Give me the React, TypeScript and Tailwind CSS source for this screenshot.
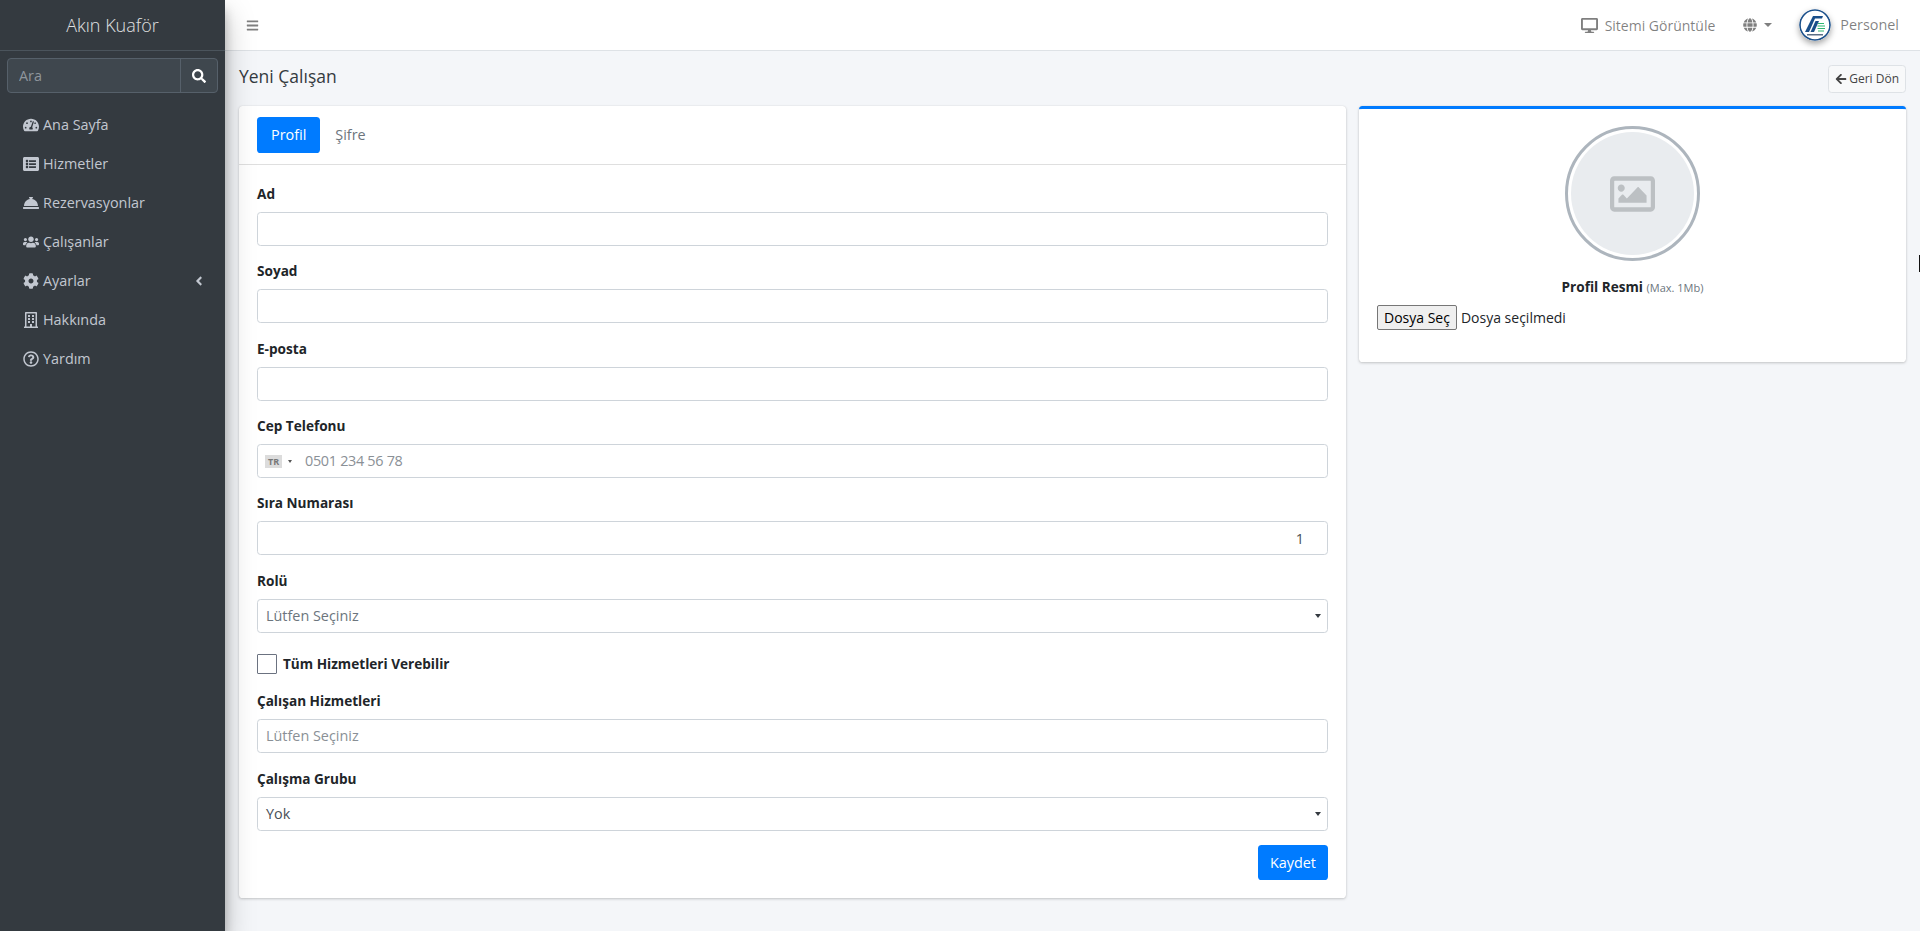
import React from "react";
import {
  FaTachometerAlt,
  FaListAlt,
  FaConciergeBell,
  FaUsers,
  FaCog,
  FaRegBuilding,
  FaRegQuestionCircle,
  FaAngleLeft,
  FaDesktop,
  FaGlobe,
  FaArrowLeft,
  FaSearch,
  FaBars,
} from "react-icons/fa";

const menu = [
  { label: "Ana Sayfa", icon: FaTachometerAlt },
  { label: "Hizmetler", icon: FaListAlt },
  { label: "Rezervasyonlar", icon: FaConciergeBell },
  { label: "Çalışanlar", icon: FaUsers },
  { label: "Ayarlar", icon: FaCog, arrow: true },
  { label: "Hakkında", icon: FaRegBuilding },
  { label: "Yardım", icon: FaRegQuestionCircle },
];

const inputClass =
  "block w-full h-[34.2px] px-[8px] bg-white border border-[#ced4da] rounded-[3.6px] text-[14.4px] text-[#495057] outline-none placeholder:text-[#8a9096]";

function Field({ label, children, className = "mb-[14.4px]" }: { label: string; children: React.ReactNode; className?: string }) {
  return (
    <div className={className}>
      <label className="block mb-[7.2px] text-[13.6px] leading-[21.6px] font-bold text-[#212529]">{label}</label>
      {children}
    </div>
  );
}

function Caret() {
  return <span className="absolute right-[6px] top-[14px] w-0 h-0 border-x-[3.5px] border-x-transparent border-t-[4px] border-t-[#343a40]" />;
}

function Sidebar() {
  return (
    <aside className="w-[225px] shrink-0 bg-[#343a40] shadow-[0_14px_28px_rgba(0,0,0,0.25),0_10px_10px_rgba(0,0,0,0.22)] z-10">
      <div className="h-[51px] flex items-center justify-center border-b border-[#4b545c] text-[18px] font-light text-[#e0e1e2]">
        Akın Kuaför
      </div>
      <div className="px-[7px] pt-[7px]">
        <div className="flex h-[35px] bg-[#3f474e] border border-[#56606a] rounded-[4px]">
          <input placeholder="Ara" className="flex-1 min-w-0 px-[11px] bg-transparent text-[14.4px] outline-none placeholder:text-[#8f969c]" />
          <span className="w-[37px] flex items-center justify-center border-l border-[#56606a] text-white text-[14px]">
            <FaSearch />
          </span>
        </div>
      </div>
      <nav className="mt-[12.5px]">
        {menu.map((item) => (
          <a key={item.label} className="flex items-center h-[39px] pl-[20px] pr-[19px] text-[14.4px] text-[#c2c7d0]">
            <span className="w-[22px] flex justify-center text-[16px] mr-[1px]">
              <item.icon />
            </span>
            <span>{item.label}</span>
            {item.arrow && (
              <span className="ml-auto text-[14px]">
                <FaAngleLeft />
              </span>
            )}
          </a>
        ))}
      </nav>
    </aside>
  );
}

function Topbar() {
  return (
    <header className="h-[51px] shrink-0 flex items-center bg-white border-b border-[#dee2e6] pl-[21px] pr-[21px] text-[14.4px] text-[#00000080]">
      <FaBars className="text-[13px]" />
      <div className="ml-auto flex items-center">
        <FaDesktop className="text-[17px] mr-[7px]" />
        <span className="text-[14px]">Sitemi Görüntüle</span>
        <FaGlobe className="text-[14px] ml-[28px]" />
        <span className="ml-[7px] w-0 h-0 border-x-[4px] border-x-transparent border-t-[4px] border-t-[#00000080]" />
        <svg viewBox="0 0 32 32" className="ml-[27px] w-[32px] h-[32px] rounded-full shadow-[0_3px_6px_rgba(0,0,0,0.35)]">
          <circle cx="16" cy="16" r="15" fill="#fff" stroke="#1a4f8a" strokeWidth="1.6" />
          <path d="M6 23 L14 7 H24 L23 9.5 H16 L10 23 Z" fill="#1a4f8a" />
          <path d="M11.5 23 L16.5 12 H20 L15 23 Z" fill="#1a4f8a" />
          <path d="M19 14.5 H25 M18.5 17 H26 M18.5 19.5 H26 M19 22 H25" stroke="#2fb673" strokeWidth="1.2" />
          <rect x="8" y="25" width="16" height="1.5" fill="#5b6f86" />
        </svg>
        <span className="ml-[9px]">Personel</span>
      </div>
    </header>
  );
}

function ProfileCard() {
  return (
    <section className="flex-1 bg-white rounded-[3.6px] shadow-[0_0_1px_rgba(0,0,0,0.125),0_1px_3px_rgba(0,0,0,0.2)]">
      <div className="h-[59px] flex items-center px-[18px] border-b border-[#00000020]">
        <a className="h-[36px] px-[14px] flex items-center rounded-[3.6px] bg-[#007bff] text-white text-[14.4px]">Profil</a>
        <a className="ml-[1px] h-[36px] px-[14px] flex items-center text-[14.4px] text-[#6c757d]">Şifre</a>
      </div>
      <form className="p-[18px]">
        <Field label="Ad">
          <input className={inputClass} />
        </Field>
        <Field label="Soyad">
          <input className={inputClass} />
        </Field>
        <Field label="E-posta">
          <input className={inputClass} />
        </Field>
        <Field label="Cep Telefonu">
          <div className="relative">
            <input placeholder="0501 234 56 78" className={inputClass + " pl-[47px] tracking-[-0.3px]"} />
            <span className="absolute left-[8px] top-[11px] w-[17px] h-[13px] bg-[#dcdcdc] flex items-center justify-center text-[9px] font-bold text-[#777]">TR</span>
            <span className="absolute left-[31px] top-[16px] w-0 h-0 border-x-[2.5px] border-x-transparent border-t-[3px] border-t-[#555]" />
          </div>
        </Field>
        <Field label="Sıra Numarası">
          <input defaultValue="1" className={inputClass + " text-right pr-[23px]"} />
        </Field>
        <Field label="Rolü">
          <div className={inputClass + " relative flex items-center !text-[#6c757d]"}>
            Lütfen Seçiniz
            <Caret />
          </div>
        </Field>
        <div className="flex items-center h-[20px] mb-[16px] mt-[21px]">
          <span className="w-[20px] h-[20px] border border-[#6b7280] rounded-[1px] bg-white" />
          <span className="ml-[6px] text-[13.6px] font-bold text-[#212529]">Tüm Hizmetleri Verebilir</span>
        </div>
        <Field label="Çalışan Hizmetleri" className="mb-[15.4px]">
          <input placeholder="Lütfen Seçiniz" className={inputClass} />
        </Field>
        <Field label="Çalışma Grubu">
          <div className={inputClass + " relative flex items-center"}>
            Yok
            <Caret />
          </div>
        </Field>
        <div className="flex justify-end">
          <button type="button" className="h-[35px] px-[12px] rounded-[3.6px] bg-[#007bff] text-white text-[14.4px]">Kaydet</button>
        </div>
      </form>
    </section>
  );
}

function PhotoCard() {
  return (
    <section className="w-[547px] shrink-0 self-start h-[256px] bg-white rounded-[3.6px] border-t-[3px] border-[#007bff] shadow-[0_0_1px_rgba(0,0,0,0.125),0_1px_3px_rgba(0,0,0,0.2)] p-[18px] pt-[17px]">
      <div className="mx-auto w-[135px] h-[135px] rounded-full border-[3px] border-[#adb5bd] p-[3px]">
        <div className="w-full h-full rounded-full bg-[#e9ecef] flex items-center justify-center">
          <svg viewBox="0 60 512 392" preserveAspectRatio="none" className="w-[45px] h-[36px] fill-[#bcc0c3]">
            <path d="M464 64H48C21.49 64 0 85.49 0 112v288c0 26.51 21.49 48 48 48h416c26.51 0 48-21.49 48-48V112c0-26.51-21.49-48-48-48zm-6 336H54a6 6 0 0 1-6-6V118a6 6 0 0 1 6-6h404a6 6 0 0 1 6 6v276a6 6 0 0 1-6 6zM128 152c-22.091 0-40 17.909-40 40s17.909 40 40 40 40-17.909 40-40-17.909-40-40-40zM96 352h320v-80l-87.515-87.515c-4.686-4.686-12.284-4.686-16.971 0L192 304l-39.515-39.515c-4.686-4.686-12.284-4.686-16.971 0L96 304v48z" />
          </svg>
        </div>
      </div>
      <div className="mt-[15px] text-center text-[13.6px] leading-[21.6px] font-bold text-[#212529]">
        Profil Resmi <small className="text-[11px] font-normal text-[#6c757d]">(Max. 1Mb)</small>
      </div>
      <div className="mt-[6px] flex items-center text-[14px] text-[#212529]">
        <button type="button" className="h-[25px] px-[6px] bg-[#efefef] border border-[#767676] rounded-[2px] text-[#000]">Dosya Seç</button>
        <span className="ml-[4px]">Dosya seçilmedi</span>
      </div>
    </section>
  );
}

export default function App() {
  return (
    <div className="relative flex w-[1920px] h-[931px] overflow-hidden bg-[#f4f6f9] font-['Open_Sans',sans-serif]">
      <Sidebar />
      <div className="flex-1 min-w-0 flex flex-col">
        <Topbar />
        <main className="flex-1 pl-[14px] pr-[14px]">
          <div className="h-[55px] flex items-start justify-between">
            <h1 className="mt-[12px] text-[17.5px] leading-[26px] font-normal text-[#343a40]">Yeni Çalışan</h1>
            <button type="button" className="mt-[14px] h-[28px] px-[6px] flex items-center gap-[2px] bg-[#f8f9fa] border border-[#dee2e6] rounded-[3.6px] text-[12px] text-[#444]">
              <FaArrowLeft className="text-[12px]" /> Geri Dön
            </button>
          </div>
          <div className="flex items-start gap-[13px]">
            <ProfileCard />
            <PhotoCard />
          </div>
        </main>
      </div>
      {/* stray caret at the window edge */}
      <span className="absolute right-0 top-[255px] w-[1px] h-[17px] bg-[#111]" />
    </div>
  );
}
